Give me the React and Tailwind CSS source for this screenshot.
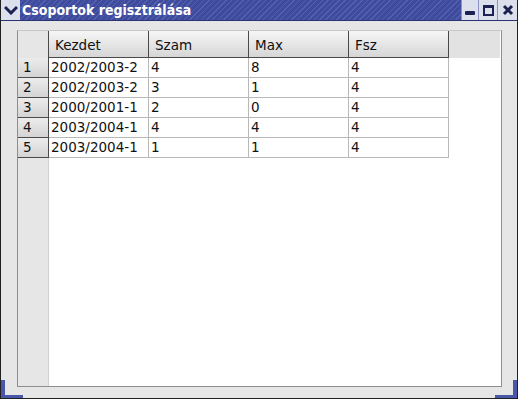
import React from "react";

const rows = [
    ["2002/2003-2", "4", "8", "4"],
    ["2002/2003-2", "3", "1", "4"],
    ["2000/2001-1", "2", "0", "4"],
    ["2003/2004-1", "4", "4", "4"],
    ["2003/2004-1", "1", "1", "4"],
];

const headers = ["Kezdet", "Szam", "Max", "Fsz"];

function TitleButton({ children, className = "" }) {
    return (
        <div className={"h-[20px] flex items-center justify-center bg-[#dcdfec] border-l border-[#8c93c4] " + className}>
            {children}
        </div>
    );
}

export default function App() {
    return (
        <div className="w-[519px] h-[403px] bg-white relative font-['DejaVu_Sans',sans-serif] text-[#111]">
            <div className="w-[518px] h-[399px] flex flex-col bg-[#e6e6e6] border-l border-r border-b border-[#202020] relative">
                {/* title bar */}
                <div className="h-[21px] flex items-stretch bg-[repeating-linear-gradient(135deg,#3f4c9e_0px,#3f4c9e_3px,#5461b0_3px,#5461b0_4px)] border-b border-[#2b3470]">
                    <div className="w-[19px] flex items-center justify-center bg-[#dcdfec]">
                        <svg width="14" height="10" viewBox="0 0 14 10">
                            <path d="M1 2 L7 8 L13 2" stroke="#1b2150" strokeWidth="3" fill="none" />
                        </svg>
                    </div>
                    <div className="flex-1 pl-[2px] text-white font-bold text-[14px] leading-[20px] font-['DejaVu_Sans_Condensed','DejaVu_Sans',sans-serif]">
                        Csoportok regisztrálása
                    </div>
                    <TitleButton className="w-[17px]">
                        <div className="w-[10px] h-[4px] bg-[#1b2150] rounded-[1px] mt-[5px]" />
                    </TitleButton>
                    <TitleButton className="w-[19px]">
                        <div className="w-[11px] h-[11px] border-2 border-t-[3px] border-[#1b2150]" />
                    </TitleButton>
                    <TitleButton className="w-[20px]">
                        <svg width="12" height="12" viewBox="0 0 12 12">
                            <path d="M2 2 L10 10 M10 2 L2 10" stroke="#1b2150" strokeWidth="3" />
                        </svg>
                    </TitleButton>
                </div>

                {/* body */}
                <div className="flex-1 flex flex-col pl-[16px] pr-[15px] pt-[9px] pb-[11px]">
                    <div className="flex-1 flex flex-col border border-[#8e8e8e] border-t-[#c8c8c8] bg-white text-[13.5px]">
                        {/* header row */}
                        <div className="h-[27px] flex bg-[#e4e4e4]">
                            <div className="w-[31px] border-r border-[#4a4a4a] bg-[#e6e6e6]" />
                            {headers.map((h) => (
                                <div
                                    key={h}
                                    className="w-[100px] border-r border-b border-[#4a4a4a] bg-[linear-gradient(#f6f6f6,#d6d6d6)] pl-[6px] flex items-center pt-[2px]"
                                >
                                    {h}
                                </div>
                            ))}
                            <div className="flex-1 border-r border-white bg-[#e2e2e2]" />
                        </div>
                        {/* data rows */}
                        {rows.map((r, i) => (
                            <div key={i} className="h-[20px] flex">
                                <div className="w-[31px] border-r border-b border-[#4a4a4a] bg-[linear-gradient(#ececec,#d4d4d4)] pl-[5px] leading-[19px]">
                                    {i + 1}
                                </div>
                                {r.map((c, j) => (
                                    <div
                                        key={j}
                                        className="w-[100px] border-r border-b border-[#b8b8b8] pl-[2px] leading-[19px]"
                                    >
                                        {c}
                                    </div>
                                ))}
                                <div className="flex-1" />
                            </div>
                        ))}
                        <div className="flex-1 flex">
                            <div className="w-[31px] bg-[#e6e6e6] border-r border-[#d0d0d0]" />
                            <div className="flex-1" />
                        </div>
                    </div>
                </div>

                {/* resize corners */}
                <div className="absolute left-0 bottom-0 w-[22px] h-[18px] border-l-[4px] border-b-[3px] border-[#4a56a8]" />
                <div className="absolute right-0 bottom-0 w-[22px] h-[18px] border-r-[4px] border-b-[3px] border-[#4a56a8]" />
            </div>
        </div>
    );
}
